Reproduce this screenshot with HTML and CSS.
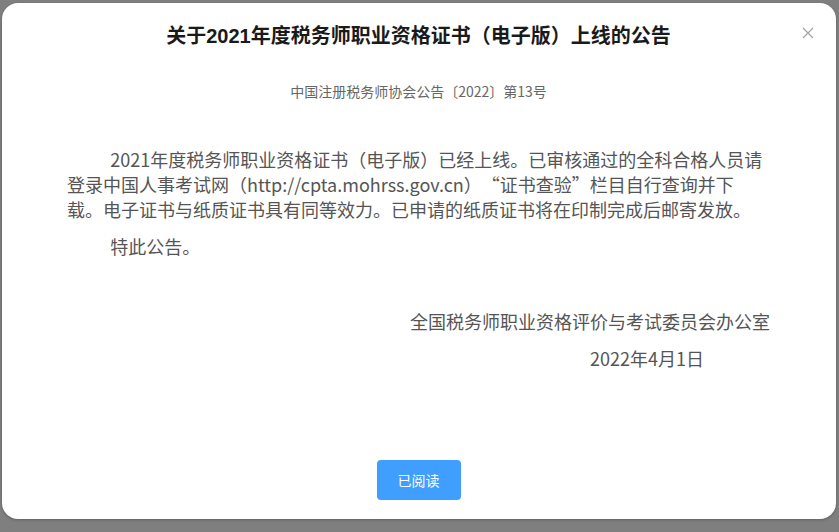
FILE: index.html
```html
<!DOCTYPE html>
<html lang="zh-CN">
<head>
  <meta charset="UTF-8" />
  <meta name="viewport" content="width=device-width, initial-scale=1.0"/>
  <title>公告</title>
  <link rel="stylesheet" href="styles.css">
</head>
<body>
  <div class="modal">
    <button class="close" aria-label="关闭">
      <svg width="12" height="12" viewBox="0 0 12 12"><path d="M1 1 L11 11 M11 1 L1 11" stroke="#a0a3a9" stroke-width="1.2" fill="none"/></svg>
    </button>
    <h2 class="title">关于2021年度税务师职业资格证书（电子版）上线的公告</h2>
    <div class="doc-no">中国注册税务师协会公告〔2022〕第13号</div>
    <div class="content">
      <p>2021年度税务师职业资格证书（电子版）已经上线。已审核通过的全科合格人员请登录中国人事考试网（http://cpta.mohrss.gov.cn）“证书查验”栏目自行查询并下载。电子证书与纸质证书具有同等效力。已申请的纸质证书将在印制完成后邮寄发放。</p>
      <p>特此公告。</p>
      <p class="sign">全国税务师职业资格评价与考试委员会办公室</p>
      <p class="date">2022年4月1日</p>
    </div>
    <div class="footer">
      <button class="btn-primary">已阅读</button>
    </div>
  </div>
</body>
</html>
```
FILE: styles.css
```css
* { box-sizing: border-box; }
body {
  margin: 0;
  background: #7f7f7f;
  font-family: "Noto Sans CJK SC", "Microsoft YaHei", sans-serif;
  display: flex;
  padding: 3px 3px 13px 2px;
  height: 532px;
}
.modal {
  position: relative;
  width: 834px;
  height: 516px;
  background: #fff;
  border-radius: 16px;
  box-shadow: 0 1px 3px rgba(0,0,0,0.25);
  padding: 19px 66px 19px 65px;
  display: flex;
  flex-direction: column;
}
.close {
  position: absolute;
  top: 24px;
  right: 22px;
  border: none;
  background: none;
  padding: 0;
  cursor: pointer;
  line-height: 0;
}
.title {
  margin: 0;
  text-align: center;
  font-family: "Liberation Sans", "Noto Sans CJK SC", sans-serif;
  font-size: 20px;
  line-height: 28px;
  font-weight: bold;
  color: #1a1a1a;
}
.doc-no {
  margin-top: 31px;
  text-align: center;
  font-size: 14px;
  line-height: 20px;
  color: #666;
}
.content {
  margin-top: 46px;
  margin-right: 3px;
  font-size: 18px;
  line-height: 25px;
  color: #555;
  text-spacing-trim: space-all;
}
.content p {
  margin: 0 0 12px;
  text-indent: 2.4em;
}
.content .sign {
  margin-top: 50px;
  margin-right: -3px;
  text-align: right;
  text-indent: 0;
}
.content .date {
  text-align: right;
  text-indent: 0;
  padding-right: 63px;
}
.footer {
  margin-top: auto;
  text-align: center;
}
.btn-primary {
  width: 84px;
  height: 40px;
  border: none;
  border-radius: 4px;
  background: #409eff;
  color: #fff;
  font-family: inherit;
  font-size: 14px;
  cursor: pointer;
}
```
